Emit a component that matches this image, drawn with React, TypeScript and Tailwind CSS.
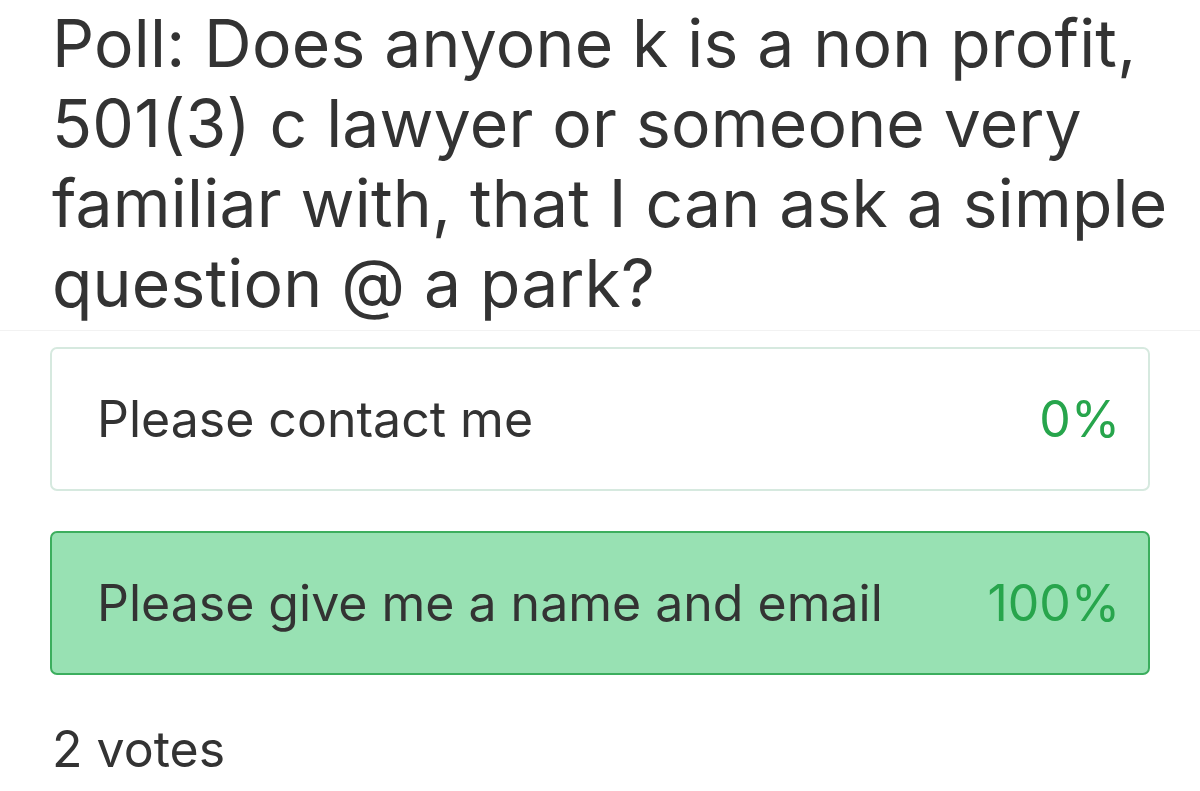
export default function App() {
  return (
    <div className="w-[1200px] h-[791px] bg-white text-[#333333] overflow-hidden" style={{ fontFamily: 'Inter, "Liberation Sans", Arial, sans-serif' }}>
      <div className="pl-[52px] pt-[3px] pb-[7px] border-b border-[#f2f2f2]">
        <h1 className="text-[66px] leading-[80px] tracking-[0.2px] whitespace-nowrap">
          Poll: Does anyone k is a non profit,<br />
          501(3) c lawyer or someone very<br />
          familiar with, that I can ask a simple<br />
          question @ a park?
        </h1>
      </div>
      <div className="px-[50px] pt-[16px] flex flex-col gap-[40px]">
        <div className="h-[144px] rounded-[7px] border-2 border-[#d6e9df] bg-white flex items-center justify-between pl-[45px] pr-[28px]">
          <span className="text-[50px]">Please contact me</span>
          <span className="text-[50px] text-[#27a54c]">0%</span>
        </div>
        <div className="h-[144px] rounded-[7px] border-2 border-[#3cae5e] bg-[#98e1b3] flex items-center justify-between pl-[45px] pr-[28px]">
          <span className="text-[50px]">Please give me a name and email</span>
          <span className="text-[50px] text-[#27a54c]">100%</span>
        </div>
      </div>
      <div className="px-[52px] pt-[49px] text-[50px] leading-none">2 votes</div>
    </div>
  );
}
